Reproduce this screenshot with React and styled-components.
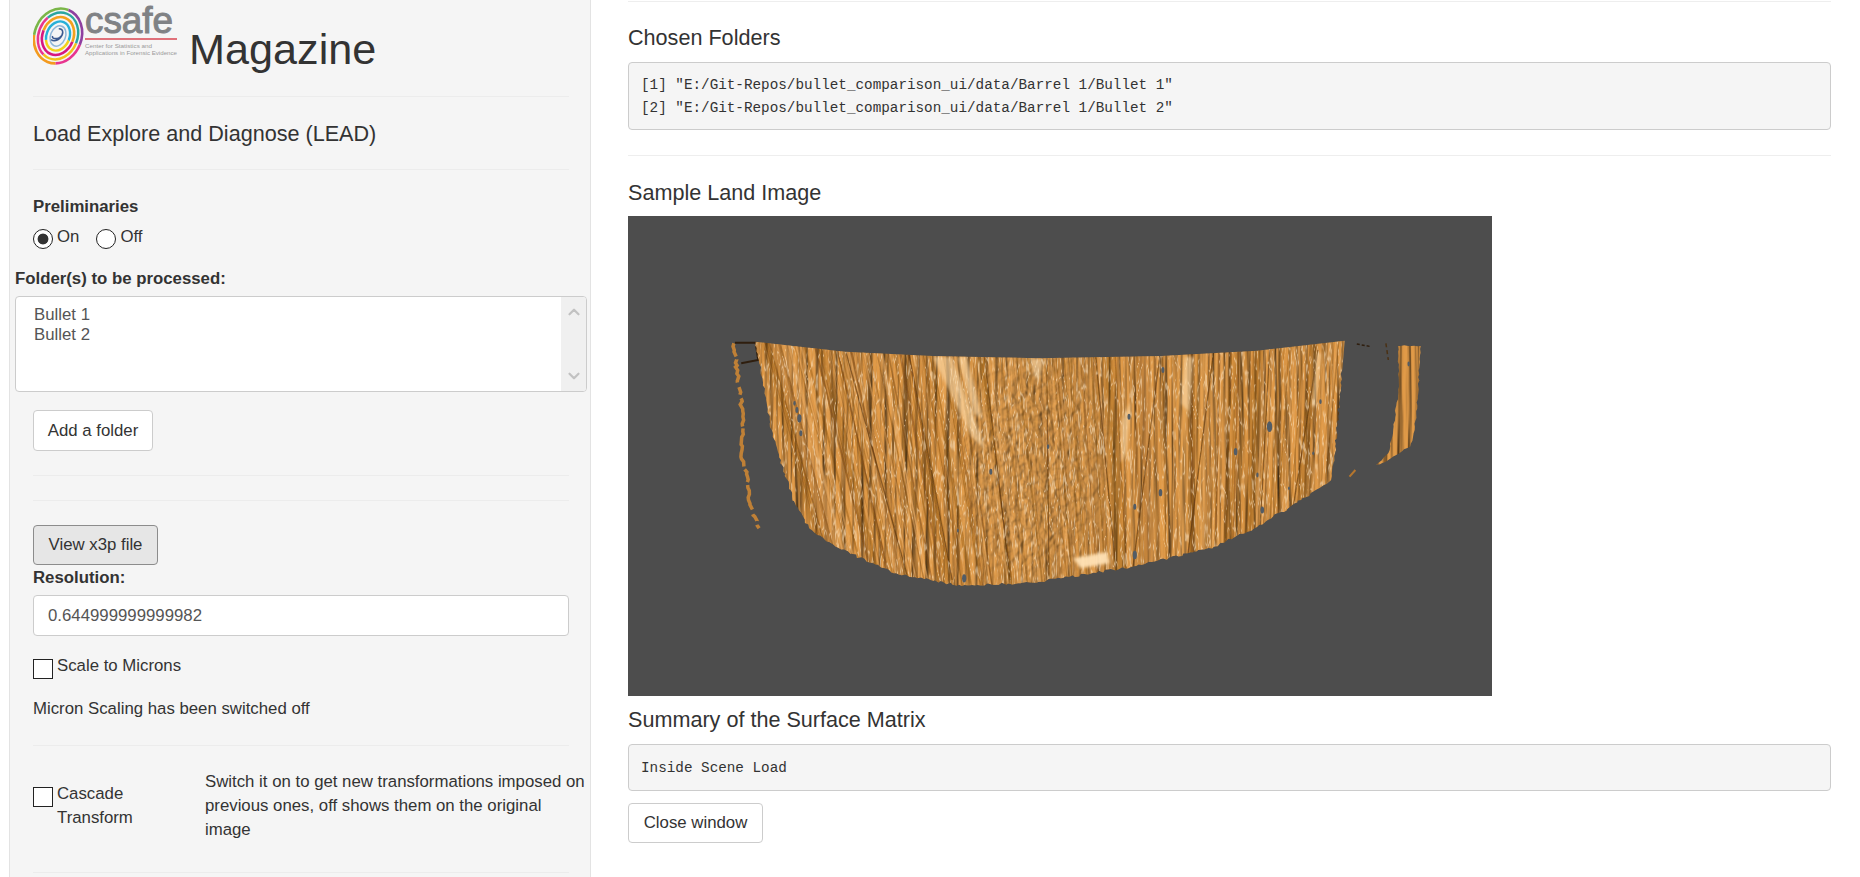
import React from "react";
import styled, { createGlobalStyle } from "styled-components";
import { ChevronUp, ChevronDown } from "lucide-react";

const GlobalStyle = createGlobalStyle`
  html, body {
    margin: 0;
    height: 877px;
    overflow: hidden;
    background: #fff;
  }
  * { box-sizing: border-box; }
`;

const Shell = styled.div`
  display: flex;
  height: 877px;
  overflow: hidden;
  font-family: "Liberation Sans", Arial, sans-serif;
  font-size: 16.8px;
  line-height: 24px;
  color: #333;
`;

const Sidebar = styled.aside`
  flex: none;
  width: 582px;
  margin-left: 9px;
  padding: 0 21px 0 23px;
  background: #f5f5f5;
  border-left: 1px solid #e3e3e3;
  border-right: 1px solid #e3e3e3;
`;

const Main = styled.main`
  flex: none;
  width: 1203px;
  margin-left: 37px;
`;

const Rule = styled.hr`
  height: 1px;
  margin: ${(p) => p.$top || 0}px 0 0;
  border: 0;
  background: ${(p) => (p.$light ? "#eeeeee" : "#ececec")};
`;

const Brand = styled.header`
  display: flex;
  align-items: flex-start;
  height: 96px;
`;

const Magazine = styled.h1`
  margin: 22px 0 0 10px;
  font-size: 43.2px;
  line-height: 54px;
  font-weight: 400;
`;

const Lead = styled.h4`
  display: flex;
  align-items: center;
  height: 72px;
  margin: 0;
  padding-top: 1px;
  font-size: 21.6px;
  font-weight: 400;
`;

const Label = styled.div`
  margin-top: ${(p) => p.$top || 0}px;
  margin-left: ${(p) => (p.$out ? -18 : 0)}px;
  font-weight: 700;
`;

const RadioRow = styled.div`
  display: flex;
  gap: 17px;
  margin-top: 10px;
  height: 26px;
`;

const Option = styled.label`
  display: flex;
  align-items: flex-start;
  gap: 4px;
  line-height: 15px;
`;

const Radio = styled.input.attrs({ type: "radio" })`
  appearance: none;
  flex: none;
  width: 20px;
  height: 20px;
  margin: 0;
  border: 1px solid #222;
  border-radius: 50%;
  background: #fff;

  &:checked {
    background: radial-gradient(circle, #333 0 5px, #fff 5.8px);
  }
`;

const Check = styled.input.attrs({ type: "checkbox" })`
  appearance: none;
  flex: none;
  width: 20px;
  height: 20px;
  margin: 5px 0 0;
  border: 1px solid #222;
  background: #fff;
`;

const ListBox = styled.div`
  display: flex;
  justify-content: space-between;
  width: 572px;
  height: 96px;
  margin: 5px 0 0 -18px;
  background: #fff;
  border: 1px solid #ccc;
  border-radius: 4px;
  overflow: hidden;
`;

const ListItems = styled.div`
  padding: 8px 0 0 18px;
  line-height: 20px;
  color: #555;
`;

const ScrollTrack = styled.div`
  display: flex;
  flex-direction: column;
  justify-content: space-between;
  align-items: center;
  width: 25px;
  padding: 6px 0;
  background: #f0f0f0;
  color: #c2c2c2;
`;

const Button = styled.button`
  display: block;
  width: ${(p) => p.$w}px;
  height: ${(p) => p.$h || 41}px;
  margin-top: ${(p) => p.$top || 0}px;
  padding: 0;
  font: inherit;
  color: #333;
  background: ${(p) => (p.$active ? "#e6e6e6" : "#fff")};
  border: 1px solid ${(p) => (p.$active ? "#8c8c8c" : "#ccc")};
  border-radius: 4px;
`;

const TextBox = styled.input`
  display: block;
  width: 100%;
  height: 41px;
  margin-top: 5px;
  padding: 0 14px;
  font: inherit;
  color: #555;
  background: #fff;
  border: 1px solid #ccc;
  border-radius: 4px;
`;

const CheckRow = styled.label`
  display: flex;
  gap: 4px;
  margin-top: ${(p) => p.$top || 0}px;
`;

const Note = styled.p`
  margin: 18px 0 0;
`;

const CascadeRow = styled.div`
  display: flex;
  margin-top: 24px;
  margin-right: -18px;
`;

const CascadeLabel = styled.div`
  display: flex;
  flex: none;
  gap: 4px;
  width: 172px;
  padding-top: 12px;
`;

const Heading = styled.h4`
  margin: ${(p) => p.$top}px 0 0;
  font-size: 21.6px;
  line-height: 24px;
  font-weight: 400;
`;

const Output = styled.pre`
  margin: ${(p) => p.$top}px 0 0;
  padding: ${(p) => p.$pad + 1}px 12px ${(p) => p.$pad - 1}px;
  font-family: "Liberation Mono", "DejaVu Sans Mono", monospace;
  font-size: 14.3px;
  line-height: 23px;
  color: #333;
  background: #f5f5f5;
  border: 1px solid #ccc;
  border-radius: 4px;
`;

const Scene = styled.svg`
  display: block;
  width: 864px;
  height: 480px;
  margin-top: 11px;
  background: #4d4d4d;
`;

// seeded so every render draws the same land
function seeded(seed) {
  let s = seed;
  return () => {
    s = (s * 16807) % 2147483647;
    return (s - 1) / 2147483646;
  };
}

// the outlines were read from a zoomed crop, convert them to scene coordinates
const toScene = ([px, py]) => [72 + px / 2.063, 104 + py / 3];

function outline(points, jitter = 0, seed = 7) {
  const rnd = seeded(seed);
  const out = [];
  points.forEach((p, i) => {
    const a = toScene(p);
    out.push(a);
    const next = points[i + 1];
    if (!jitter || !next) return;
    const b = toScene(next);
    const steps = Math.floor(Math.hypot(b[0] - a[0], b[1] - a[1]) / 3);
    for (let k = 1; k < steps; k++) {
      const t = k / steps;
      out.push([
        a[0] + (b[0] - a[0]) * t + (rnd() - 0.5) * jitter,
        a[1] + (b[1] - a[1]) * t + (rnd() - 0.5) * jitter,
      ]);
    }
  });
  return out.map((p) => p.map((n) => n.toFixed(1)).join(",")).join(" ");
}

const top = [[115, 65], [300, 95], [480, 108], [700, 115], [950, 108], [1150, 92], [1330, 62]];
const right = [[1325, 150], [1318, 250], [1310, 400], [1302, 480]];
const bottom = [[1240, 540], [1150, 620], [1060, 680], [900, 738], [700, 785], [540, 798], [400, 760], [280, 680], [225, 625], [190, 530], [150, 350], [125, 150], [115, 65]];

const bodyPoints = `${outline(top)} ${outline([...right, ...bottom], 2.5)}`;
const rightSliver = outline([[1440, 78], [1487, 78], [1482, 200], [1475, 320], [1465, 380], [1420, 420], [1395, 435], [1420, 400], [1430, 330], [1442, 200], [1440, 78]], 1.5, 11);
const leftFragments = outline([[70, 70], [80, 200], [90, 300], [85, 400], [98, 470], [100, 540], [122, 625]], 2.5, 19);

function makeStreaks(count, seed, minWidth, maxWidth, minOpacity, maxOpacity) {
  const rnd = seeded(seed);
  const lines = [];
  for (let i = 0; i < count; i++) {
    const t = rnd();
    const a = toScene([130 + t * 1190, 60]);
    const b = toScene([270 + t * 1000 + (rnd() - 0.5) * 6, 800]);
    const dark = rnd() < 0.5;
    lines.push({
      x1: a[0],
      y1: a[1],
      x2: b[0],
      y2: b[1],
      stroke: dark ? "#7a4711" : "#ecae66",
      width: minWidth + rnd() * (maxWidth - minWidth),
      opacity: minOpacity + rnd() * (maxOpacity - minOpacity),
    });
  }
  return lines;
}

const streaks = makeStreaks(200, 42, 0.6, 2.2, 0.14, 0.5);
const bands = makeStreaks(34, 77, 4, 10, 0.18, 0.4);

// the deep scratches that run the whole height
const scratches = [[300, 430], [430, 520], [585, 640], [715, 720], [815, 860], [950, 890], [1060, 1000], [1175, 1150], [1275, 1200]]
  .map(([from, to]) => outline([[from, 90], [to, 780]]));

const glints = [
  [[480, 110], [520, 110], [590, 390], [560, 350]],
  [[530, 110], [550, 110], [585, 300], [565, 280]],
  [[1000, 110], [1018, 110], [1010, 280], [992, 250]],
  [[770, 715], [840, 695], [845, 730], [785, 745]],
  [[680, 115], [708, 118], [700, 180], [690, 170]],
  [[1272, 100], [1282, 100], [1270, 260], [1262, 260]],
  [[870, 300], [890, 240], [880, 400], [868, 430]],
].map((g) => outline(g));

const specks = [
  [200, 270, 5], [205, 295, 7], [208, 340, 5], [195, 250, 4], [885, 290, 5], [950, 518, 6], [1105, 395, 6],
  [1175, 320, 9], [1150, 465, 4], [1215, 505, 3], [1280, 245, 4], [1160, 570, 6], [545, 775, 7], [532, 632, 3],
  [600, 455, 5], [718, 380, 4], [955, 150, 5], [897, 560, 5], [897, 705, 7], [1462, 132, 4], [1265, 400, 3],
];

function LandImage() {
  return (
    <Scene viewBox="0 0 864 480">
      <defs>
        <filter id="ridges" x="0" y="0" width="100%" height="100%" colorInterpolationFilters="sRGB">
          <feTurbulence type="fractalNoise" baseFrequency="0.14 0.006" numOctaves="3" seed="5" result="n" />
          <feDiffuseLighting in="n" surfaceScale="3" diffuseConstant="1.12" lightingColor="#c98a40" result="l">
            <feDistantLight azimuth="180" elevation="62" />
          </feDiffuseLighting>
          <feComposite in="l" in2="SourceAlpha" operator="in" />
        </filter>
        <filter id="bumps" x="0" y="0" width="100%" height="100%" colorInterpolationFilters="sRGB">
          <feTurbulence type="fractalNoise" baseFrequency="0.16 0.12" numOctaves="2" seed="9" result="n" />
          <feDiffuseLighting in="n" surfaceScale="2.4" diffuseConstant="1.14" lightingColor="#cb904a" result="l">
            <feDistantLight azimuth="200" elevation="60" />
          </feDiffuseLighting>
          <feComposite in="l" in2="SourceAlpha" operator="in" />
        </filter>
        <filter id="glitter" x="0" y="0" width="100%" height="100%" colorInterpolationFilters="sRGB">
          <feTurbulence type="fractalNoise" baseFrequency="0.16 0.04" numOctaves="2" seed="21" result="n" />
          <feSpecularLighting in="n" surfaceScale="6" specularConstant="0.9" specularExponent="40" lightingColor="#ffe9c8" result="s">
            <feDistantLight azimuth="160" elevation="50" />
          </feSpecularLighting>
          <feComposite in="s" in2="SourceAlpha" operator="in" />
        </filter>
        <filter id="soft"><feGaussianBlur stdDeviation="1.6" /></filter>
        <filter id="hair"><feGaussianBlur stdDeviation="0.45" /></filter>
        <filter id="wide"><feGaussianBlur stdDeviation="2" /></filter>
        <radialGradient id="patchFade">
          <stop offset="0.5" stopColor="#fff" />
          <stop offset="1" stopColor="#000" />
        </radialGradient>
        <mask id="patchMask" maskUnits="userSpaceOnUse" x="0" y="0" width="864" height="480">
          <ellipse cx="405" cy="250" rx="90" ry="150" fill="url(#patchFade)" />
        </mask>
        <clipPath id="body"><polygon points={bodyPoints} /></clipPath>
      </defs>

      <polyline points={leftFragments} fill="none" stroke="#bf8036" strokeWidth="3.5" strokeDasharray="14 3 26 5 8 4 30 2 40 3" />
      <polygon points={rightSliver} fill="#d49a55" filter="url(#ridges)" />
      <polyline points={outline([[72, 68], [115, 68], [120, 120], [85, 130]])} fill="none" stroke="#2f1e0e" strokeWidth="2" />
      <polygon points={bodyPoints} fill="#b3732b" filter="url(#ridges)" />
      <g clipPath="url(#body)">
        <g filter="url(#wide)">
          {bands.map((s, i) => (
            <line key={i} x1={s.x1} y1={s.y1} x2={s.x2} y2={s.y2} stroke={s.stroke} strokeWidth={s.width} opacity={s.opacity} />
          ))}
        </g>
        <g mask="url(#patchMask)" opacity="0.7">
          <rect x="295" y="100" width="220" height="300" fill="#b3732b" filter="url(#bumps)" />
        </g>
        <g filter="url(#hair)">
          {streaks.map((s, i) => (
            <line key={i} x1={s.x1} y1={s.y1} x2={s.x2} y2={s.y2} stroke={s.stroke} strokeWidth={s.width} opacity={s.opacity} />
          ))}
          {scratches.map((s, i) => (
            <polyline key={i} points={s} fill="none" stroke="#55310c" strokeWidth="1.3" opacity="0.6" />
          ))}
        </g>
        <polygon points={bodyPoints} fill="#fff" filter="url(#glitter)" opacity="0.6" />
        <g filter="url(#soft)">
          {glints.map((g, i) => <polygon key={i} points={g} fill="#ffe2b5" opacity={i === 3 ? 0.95 : 0.55} />)}
        </g>
      </g>
      {specks.map(([x, y, r], i) => {
        const [cx, cy] = toScene([x, y]);
        return <ellipse key={i} cx={cx} cy={cy} rx={r * 0.3} ry={r * 0.6} fill="#525c66" />;
      })}
      <polyline points={outline([[1355, 72], [1385, 80]])} fill="none" stroke="#2f1e0e" strokeWidth="1.5" strokeDasharray="3 2" />
      <polyline points={outline([[1415, 70], [1420, 120]])} fill="none" stroke="#4a3115" strokeWidth="1.5" strokeDasharray="4 3" />
      <polyline points={outline([[1340, 470], [1352, 450]])} fill="none" stroke="#b5762e" strokeWidth="2" />
    </Scene>
  );
}

const rings = [
  { rx: 23.5, ry: 28, w: 2.6, parts: [["#e8358f", 0, 0.2], ["#f39a1f", 0.2, 0.25], ["#7ab648", 0.45, 0.3], ["#8f3fa0", 0.75, 0.25]] },
  { rx: 19.5, ry: 24, w: 2.4, parts: [["#f2c21a", 0, 0.3], ["#e8358f", 0.3, 0.3], ["#2aa6a0", 0.6, 0.4]] },
  { rx: 15.5, ry: 19.5, w: 2.6, parts: [["#d7187f", 0, 0.5], ["#f4a11d", 0.5, 0.5]] },
  { rx: 11.5, ry: 15, w: 2.4, parts: [["#f2d21a", 0, 0.4], ["#27b0d8", 0.4, 0.6]] },
  { rx: 7.5, ry: 10.5, w: 1.5, parts: [["#8fb6d8", 0, 1]] },
];

function CsafeLogo() {
  return (
    <svg width="146" height="66" viewBox="0 -8 146 66">
      <g transform="translate(25 28) rotate(22)">
        {rings.map((r, i) =>
          r.parts.map(([color, start, len], k) => (
            <ellipse
              key={`${i}-${k}`}
              rx={r.rx}
              ry={r.ry}
              fill="none"
              stroke={color}
              strokeWidth={r.w}
              pathLength="1"
              strokeDasharray={`${len} ${1 - len}`}
              strokeDashoffset={-start}
            />
          ))
        )}
        <path d="M-2 -7 C3 -9 5 -3 2 1 C-1 4 -5 5 -5 2 M3 -5 C5 2 -1 7 -5 6" fill="none" stroke="#3c5a90" strokeWidth="1.6" />
      </g>
      <text x="52" y="25" fontFamily="Liberation Sans, Arial, sans-serif" fontSize="36" fill="#808285" stroke="#808285" strokeWidth="1" textLength="88" lengthAdjust="spacingAndGlyphs">csafe</text>
      <rect x="52" y="30" width="92" height="2" fill="#e0717a" />
      <text x="52" y="40" fontFamily="Liberation Sans, Arial, sans-serif" fontSize="6.2" fill="#9a9a9a" textLength="67" lengthAdjust="spacingAndGlyphs">Center for Statistics and</text>
      <text x="52" y="47" fontFamily="Liberation Sans, Arial, sans-serif" fontSize="6.2" fill="#9a9a9a" textLength="92" lengthAdjust="spacingAndGlyphs">Applications in Forensic Evidence</text>
    </svg>
  );
}

export default function App() {
  return (
    <Shell>
      <GlobalStyle />
      <Sidebar>
        <Brand>
          <CsafeLogo />
          <Magazine>Magazine</Magazine>
        </Brand>
        <Rule />
        <Lead>Load Explore and Diagnose (LEAD)</Lead>
        <Rule />
        <Label $top={25}>Preliminaries</Label>
        <RadioRow>
          <Option><Radio name="prelim" defaultChecked />On</Option>
          <Option><Radio name="prelim" />Off</Option>
        </RadioRow>
        <Label $out $top={12}>Folder(s) to be processed:</Label>
        <ListBox>
          <ListItems>Bullet 1<br />Bullet 2</ListItems>
          <ScrollTrack>
            <ChevronUp size={18} strokeWidth={3} />
            <ChevronDown size={18} strokeWidth={3} />
          </ScrollTrack>
        </ListBox>
        <Button $w={120} $top={18}>Add a folder</Button>
        <Rule $top={24} />
        <Rule $top={24} />
        <Button $w={125} $h={40} $top={24} $active>View x3p file</Button>
        <Label $top={1}>Resolution:</Label>
        <TextBox defaultValue="0.644999999999982" />
        <CheckRow $top={18}><Check />Scale to Microns</CheckRow>
        <Note>Micron Scaling has been switched off</Note>
        <Rule $top={24} />
        <CascadeRow>
          <CascadeLabel><Check />Cascade<br />Transform</CascadeLabel>
          <div>Switch it on to get new transformations imposed on previous ones, off shows them on the original image</div>
        </CascadeRow>
        <Rule $top={30} />
      </Sidebar>
      <Main>
        <Rule $top={1} $light />
        <Heading $top={24}>Chosen Folders</Heading>
        <Output $top={12} $pad={10}>{`[1] "E:/Git-Repos/bullet_comparison_ui/data/Barrel 1/Bullet 1"
[2] "E:/Git-Repos/bullet_comparison_ui/data/Barrel 1/Bullet 2"`}</Output>
        <Rule $top={25} $light />
        <Heading $top={25}>Sample Land Image</Heading>
        <LandImage />
        <Heading $top={12}>Summary of the Surface Matrix</Heading>
        <Output $top={12} $pad={11}>Inside Scene Load</Output>
        <Button $w={135} $h={40} $top={12}>Close window</Button>
      </Main>
    </Shell>
  );
}
